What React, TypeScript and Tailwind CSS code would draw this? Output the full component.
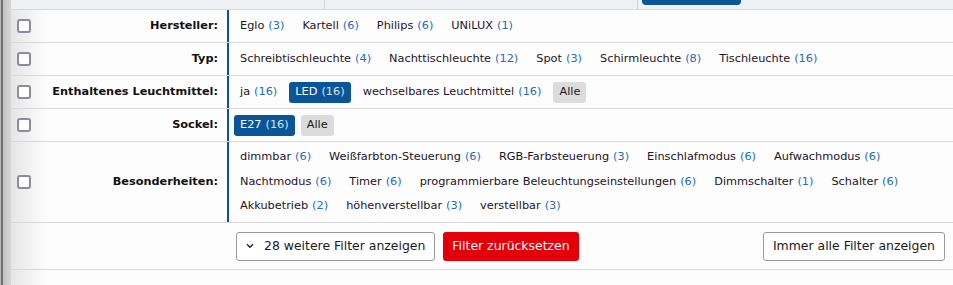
import React from "react";

type Item = { label: string; count?: number; selected?: boolean; all?: boolean };

const rows: { label: string; items: Item[][] }[] = [
  {
    label: "Hersteller:",
    items: [[
      { label: "Eglo", count: 3 },
      { label: "Kartell", count: 6 },
      { label: "Philips", count: 6 },
      { label: "UNiLUX", count: 1 },
    ]],
  },
  {
    label: "Typ:",
    items: [[
      { label: "Schreibtischleuchte", count: 4 },
      { label: "Nachttischleuchte", count: 12 },
      { label: "Spot", count: 3 },
      { label: "Schirmleuchte", count: 8 },
      { label: "Tischleuchte", count: 16 },
    ]],
  },
  {
    label: "Enthaltenes Leuchtmittel:",
    items: [[
      { label: "ja", count: 16 },
      { label: "LED", count: 16, selected: true },
      { label: "wechselbares Leuchtmittel", count: 16 },
      { label: "Alle", all: true },
    ]],
  },
  {
    label: "Sockel:",
    items: [[
      { label: "E27", count: 16, selected: true },
      { label: "Alle", all: true },
    ]],
  },
  {
    label: "Besonderheiten:",
    items: [
      [
        { label: "dimmbar", count: 6 },
        { label: "Weißfarbton-Steuerung", count: 6 },
        { label: "RGB-Farbsteuerung", count: 3 },
        { label: "Einschlafmodus", count: 6 },
        { label: "Aufwachmodus", count: 6 },
      ],
      [
        { label: "Nachtmodus", count: 6 },
        { label: "Timer", count: 6 },
        { label: "programmierbare Beleuchtungseinstellungen", count: 6 },
        { label: "Dimmschalter", count: 1 },
        { label: "Schalter", count: 6 },
      ],
      [
        { label: "Akkubetrieb", count: 2 },
        { label: "höhenverstellbar", count: 3 },
        { label: "verstellbar", count: 3 },
      ],
    ],
  },
];

function Chip({ it }: { it: Item }) {
  if (it.selected) {
    return (
      <span className="px-[6px] h-[21px] flex items-center rounded-[3px] bg-[#0a5597] text-white whitespace-nowrap">
        {it.label} <span className="ml-[4px] text-[#d6e4f2]">({it.count})</span>
      </span>
    );
  }
  if (it.all) {
    return (
      <span className="px-[6px] h-[21px] flex items-center rounded-[3px] bg-[#dcdcdc] text-[#1a1a1a] whitespace-nowrap">
        {it.label}
      </span>
    );
  }
  return (
    <span className="px-[6px] h-[21px] flex items-center text-[#1d1426] whitespace-nowrap">
      {it.label} <span className="ml-[4px] text-[#1f6cb8]">({it.count})</span>
    </span>
  );
}

export default function App() {
  return (
    <div
      className="flex w-[953px] h-[285px] overflow-hidden text-[11.3px] bg-[#fdfdfd]"
      style={{ fontFamily: '"DejaVu Sans", Verdana, sans-serif' }}
    >
      <div className="w-[11px] shrink-0 bg-[linear-gradient(to_right,#b8b8b8_0,#b8b8b8_1px,#6e6e6e_1px,#6e6e6e_3px,#c2c2c2_3px,#d6d6d6_11px)]" />
      <div className="flex-1 flex flex-col bg-[linear-gradient(to_right,#e6e6e6,#fdfdfd_36px)]">
        <div className="h-[10px] shrink-0 flex border-b border-[#d9d9d9] bg-[#eff0f3]">
          <div className="w-[314px] border-r border-[#d4d4d8]" />
          <div className="w-[313px] border-r border-[#d4d4d8]" />
          <div className="ml-[4px] w-[99px] h-[5px] rounded-b-[4px] bg-[#0a5597]" />
        </div>
        {rows.map((r) => (
          <div key={r.label} className="flex shrink-0 border-b border-[#d9d9d9]">
            <div className="w-[216px] shrink-0 flex items-center pl-[6px] pr-[9px]">
              <span className="w-[14px] h-[14px] border-2 border-[#8d8d99] rounded-[3px] bg-white shrink-0" />
              <span className="flex-1 text-right font-bold text-[#111]">{r.label}</span>
            </div>
            <div
              className={
                "flex-1 border-l-2 border-[#0a5597] pl-[5px] flex flex-col justify-center " +
                (r.items.length > 1 ? "h-[80px] gap-[3.5px]" : "h-[32px]")
              }
            >
              {r.items.map((line, i) => (
                <div key={i} className="flex gap-[6px]">
                  {line.map((it) => (
                    <Chip key={it.label} it={it} />
                  ))}
                </div>
              ))}
            </div>
          </div>
        ))}
        <div className="flex shrink-0 items-center h-[47px] border-b border-[#d9d9d9] pl-[225px] pr-[8px] text-[12.45px]">
          <button className="h-[29px] pl-[9px] pr-[9px] flex items-center gap-[10px] border border-[#9a9a9a] rounded-[3px] bg-white text-[#1a1a1a]">
            <svg width="8" height="6" viewBox="0 0 8 6">
              <path d="M1 1.2l3 3 3-3" fill="none" stroke="#222" strokeWidth="1.4" />
            </svg>
            28 weitere Filter anzeigen
          </button>
          <button className="ml-[8px] h-[29px] px-[9px] rounded-[3px] bg-[#e3000b] text-white">
            Filter zurücksetzen
          </button>
          <div className="flex-1" />
          <button className="h-[29px] px-[9px] border border-[#9a9a9a] rounded-[3px] bg-white text-[#1a1a1a]">
            Immer alle Filter anzeigen
          </button>
        </div>
        <div className="flex-1" />
      </div>
    </div>
  );
}
